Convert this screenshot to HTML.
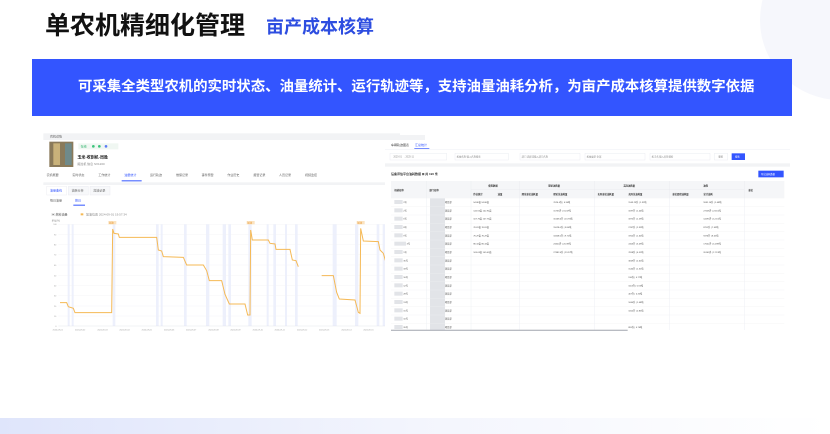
<!DOCTYPE html>
<html><head><meta charset="utf-8"><style>
body{margin:0;width:830px;height:434px;overflow:hidden;background:#fff;position:relative;font-family:"Liberation Sans","Noto Sans CJK SC",sans-serif}
.a{position:absolute}
</style></head><body>
<div class="a" style="left:760px;top:-60px;width:160px;height:160px;border-radius:50%;background:#f6f7fc"></div>
<div class="a" style="left:45px;top:9px;font-size:25px;font-weight:bold;color:#111;line-height:34px">单农机精细化管理</div>
<div class="a" style="left:266px;top:15px;font-size:18px;font-weight:bold;color:#2d4de0;line-height:24px">亩产成本核算</div>
<div class="a" style="left:32px;top:59px;width:760px;height:57px;background:#3355ff"></div>
<div class="a" style="left:78px;top:77px;font-size:14.4px;font-weight:bold;color:#fff;line-height:20px;white-space:nowrap">可采集全类型农机的实时状态、油量统计、运行轨迹等，支持油量油耗分析，为亩产成本核算提供数字依据</div>
<div class="a" style="left:0;top:418px;width:830px;height:16px;background:linear-gradient(90deg,#dfe5fb,#f3f5fd 50%,#fff)"></div>

<svg class="a" style="left:40px;top:125px" width="360" height="215" viewBox="0 0 1080 645" font-family="Liberation Sans,Noto Sans CJK SC,sans-serif">
<rect x="10" y="25" width="1070" height="590" fill="#fff"/>
<rect x="10" y="25" width="1070" height="20" fill="#f2f3f5"/>
<text x="30" y="38" font-size="9" fill="#555">农机详情</text>
<rect x="28" y="50" width="72" height="76" fill="#8a7a5a"/>
<rect x="40" y="55" width="20" height="65" fill="#c9b27a"/>
<rect x="75" y="55" width="20" height="65" fill="#6f8a8a"/>
<rect x="115" y="55" width="120" height="18" fill="#f0f7f2"/>
<text x="122" y="67" font-size="9" fill="#2db36a">在线</text>
<circle cx="160" cy="64" r="4" fill="#3cc47c"/><circle cx="178" cy="64" r="4" fill="#3cc47c"/><circle cx="198" cy="64" r="4" fill="#5b7cf5"/>
<text x="112" y="100" font-size="12" font-weight="bold" fill="#222">玉米-收割机-周胜</text>
<text x="112" y="120" font-size="9" fill="#888">拖拉机   信息   SX1200</text>
<g font-size="9" fill="#666">
<text x="20" y="153">农机概要</text><text x="97" y="153">实时状态</text><text x="175" y="153">工作统计</text><text x="253" y="153" fill="#3355ff">油量统计</text><text x="330" y="153">运行轨迹</text><text x="408" y="153">维保记录</text><text x="485" y="153">事件预警</text><text x="562" y="153">作业历史</text><text x="640" y="153">报警记录</text><text x="717" y="153">人员记录</text><text x="795" y="153">视频监控</text></g>
<rect x="245" y="166" width="60" height="3" fill="#3355ff"/>
<rect x="10" y="172" width="1070" height="8" fill="#f2f3f5"/>
<rect x="20" y="184" width="60" height="26" fill="#fff" stroke="#e3e5ea"/><rect x="85" y="184" width="60" height="26" fill="#f7f8fa" stroke="#e3e5ea"/><rect x="150" y="184" width="60" height="26" fill="#f7f8fa" stroke="#e3e5ea"/>
<text x="30" y="200" font-size="9" fill="#3355ff">油量曲线</text><text x="95" y="200" font-size="9" fill="#666">油耗分析</text><text x="160" y="200" font-size="9" fill="#666">加油记录</text>
<text x="30" y="230" font-size="9" fill="#666">每日油量</text><text x="105" y="230" font-size="9" fill="#3355ff">按日</text>
<rect x="100" y="239" width="35" height="3" fill="#3355ff"/>
<text x="35" y="272" font-size="9" fill="#555">▣ 燃料油量</text><rect x="122" y="265" width="8" height="6" fill="#f5b955"/><text x="138" y="272" font-size="9" fill="#888">加油位置 2024-09-01 19:57:34</text>
<text x="35" y="290" font-size="7" fill="#888">单位(%)</text>
<g fill="#edf0fc">
<rect x="83" y="298" width="6" height="305"/><rect x="95" y="298" width="6" height="305"/><rect x="218" y="298" width="8" height="305"/><rect x="348" y="298" width="8" height="305"/><rect x="362" y="298" width="6" height="305"/><rect x="432" y="298" width="8" height="305"/><rect x="498" y="298" width="10" height="305"/><rect x="548" y="298" width="10" height="305"/><rect x="565" y="298" width="8" height="305"/><rect x="625" y="298" width="10" height="305"/><rect x="680" y="298" width="6" height="305"/><rect x="700" y="298" width="8" height="305"/><rect x="735" y="298" width="6" height="305"/><rect x="765" y="298" width="8" height="305"/><rect x="878" y="298" width="12" height="305"/><rect x="945" y="298" width="10" height="305"/><rect x="1010" y="298" width="8" height="305"/><rect x="1028" y="298" width="8" height="305"/></g>
<g stroke="#eef0f4" stroke-width="1"><line x1="55" y1="298" x2="1045" y2="298"/><line x1="55" y1="328" x2="1045" y2="328"/><line x1="55" y1="359" x2="1045" y2="359"/><line x1="55" y1="389" x2="1045" y2="389"/><line x1="55" y1="420" x2="1045" y2="420"/><line x1="55" y1="451" x2="1045" y2="451"/><line x1="55" y1="481" x2="1045" y2="481"/><line x1="55" y1="512" x2="1045" y2="512"/><line x1="55" y1="543" x2="1045" y2="543"/><line x1="55" y1="573" x2="1045" y2="573"/><line x1="55" y1="603" x2="1045" y2="603" stroke="#d8dbe2"/></g>
<g font-size="6" fill="#999"><text x="40" y="300">100</text><text x="42" y="331">90</text><text x="42" y="362">80</text><text x="42" y="392">70</text><text x="42" y="423">60</text><text x="42" y="454">50</text><text x="42" y="484">40</text><text x="42" y="515">30</text><text x="42" y="546">20</text><text x="42" y="576">10</text><text x="46" y="606">0</text></g>
<g font-size="6" fill="#999"><text x="38" y="616">2024-09-01</text><text x="105" y="616">2024-09-02</text><text x="172" y="616">2024-09-03</text><text x="238" y="616">2024-09-04</text><text x="305" y="616">2024-09-05</text><text x="372" y="616">2024-09-06</text><text x="438" y="616">2024-09-07</text><text x="505" y="616">2024-09-08</text><text x="571" y="616">2024-09-09</text><text x="638" y="616">2024-09-10</text><text x="704" y="616">2024-09-11</text><text x="771" y="616">2024-09-12</text><text x="837" y="616">2024-09-13</text><text x="904" y="616">2024-09-14</text><text x="970" y="616">2024-09-15</text></g>
<g fill="#fbe3c0"><rect x="205" y="288" width="24" height="10"/><rect x="620" y="288" width="24" height="10"/><rect x="950" y="288" width="24" height="10"/></g>
<g font-size="7" fill="#e8952c"><text x="207" y="296">加油</text><text x="622" y="296">加油</text><text x="952" y="296">加油</text></g>
<g fill="none" stroke="#f5b955" stroke-width="3">
<polyline points="60,533 80,533 85,545 100,550 105,563 215,563 218,312 222,325 235,327 238,337 350,337 355,375 365,378 370,395 430,397 440,420 490,420 500,437 508,467 545,467 555,508 568,537 615,537 623,570 630,570 632,315 637,345 685,345 690,355 705,357 708,373 750,373 757,405 768,407 775,425"/>
<polyline points="845,452 880,452 890,502 898,522 945,525 955,562 960,565 962,310 970,348 1015,350 1020,375 1030,385 1040,420"/></g>
</svg>

<svg class="a" style="left:385px;top:130px" width="405" height="215" viewBox="0 0 1215 645" font-family="Liberation Sans,Noto Sans CJK SC,sans-serif">
<rect x="0" y="15" width="1215" height="590" fill="#fff"/>
<rect x="0" y="15" width="120" height="15" fill="#f2f3f5"/>
<text x="18" y="48" font-size="9" fill="#444">车辆轨迹图表</text><text x="90" y="48" font-size="9" fill="#3355ff">汇总统计</text>
<rect x="88" y="55" width="45" height="2" fill="#3355ff"/>
<line x1="0" y1="58" x2="1215" y2="58" stroke="#e6e8ee"/>
<g fill="#fff" stroke="#e0e3ea"><rect x="15" y="70" width="170" height="20"/><rect x="210" y="70" width="160" height="20"/><rect x="405" y="70" width="180" height="20"/><rect x="600" y="70" width="180" height="20"/><rect x="795" y="70" width="180" height="20"/><rect x="988" y="70" width="40" height="20"/></g>
<rect x="1040" y="70" width="40" height="20" fill="#3355ff"/>
<g font-size="7" fill="#888"><text x="25" y="83">2025-01   →  2025-11</text><text x="215" y="83">机械名称  输入名称搜索</text><text x="410" y="83">部门  选择或输入部门名称</text><text x="605" y="83">机械类型  全部</text><text x="800" y="83">机手名  输入名称搜索</text><text x="1000" y="83">重置</text><text x="1050" y="83" fill="#fff">搜索</text></g>
<rect x="0" y="100" width="1215" height="10" fill="#f2f3f5"/>
<text x="18" y="135" font-size="9" font-weight="bold" fill="#333">设备评估平台油耗数据 ⊞ 共 190 条</text>
<rect x="1120" y="122" width="76" height="20" fill="#3355ff"/><text x="1128" y="135" font-size="7" fill="#fff">导出油耗数据</text>
<rect x="18" y="153" width="1180" height="52" fill="#f5f6f8"/>
<g font-size="7" fill="#333" font-weight="bold"><text x="28" y="183">机械名称</text><text x="133" y="183">部门名称</text><text x="310" y="170">使用数据</text><text x="490" y="170">理论油耗量</text><text x="715" y="170">实际油耗量</text><text x="955" y="170">油耗</text><text x="1090" y="183">单位</text>
<text x="265" y="195">作业统计</text><text x="338" y="195">油量</text><text x="410" y="195">理论单位油耗量</text><text x="505" y="195">理论总油耗量</text><text x="638" y="195">实际单位油耗量</text><text x="730" y="195">实际总油耗量</text><text x="862" y="195">单位面积油耗量</text><text x="955" y="195">总计油耗</text></g>
<g stroke="#e6e8ee"><line x1="258" y1="178" x2="1078" y2="178"/><line x1="258" y1="153" x2="258" y2="600"/><line x1="403" y1="153" x2="403" y2="600"/><line x1="628" y1="153" x2="628" y2="600"/><line x1="853" y1="153" x2="853" y2="600"/><line x1="1078" y1="153" x2="1078" y2="600"/><line x1="125" y1="153" x2="125" y2="600"/></g>
<g font-size="6.5" fill="#444">
<g fill="#e2e4e8"><rect x="28" y="210" width="25" height="12"/><rect x="28" y="235" width="25" height="12"/><rect x="28" y="260" width="25" height="12"/><rect x="28" y="285" width="25" height="12"/><rect x="28" y="310" width="25" height="12"/><rect x="28" y="335" width="35" height="12"/><rect x="28" y="360" width="25" height="12"/><rect x="28" y="385" width="25" height="12"/><rect x="28" y="410" width="25" height="12"/><rect x="28" y="435" width="25" height="12"/><rect x="28" y="460" width="25" height="12"/><rect x="28" y="485" width="25" height="12"/><rect x="28" y="510" width="25" height="12"/><rect x="28" y="535" width="25" height="12"/><rect x="28" y="560" width="25" height="12"/><rect x="28" y="585" width="25" height="12"/>
<rect x="135" y="205" width="45" height="395"/></g>
<text x="55" y="219">2号</text><text x="55" y="244">2号</text><text x="55" y="269">6号</text><text x="55" y="294">8号</text><text x="55" y="319">9号</text><text x="65" y="344">3号</text><text x="55" y="369">1号</text><text x="55" y="394">35号</text><text x="55" y="419">18号</text><text x="55" y="444">16号</text><text x="55" y="469">12号</text><text x="55" y="494">28号</text><text x="55" y="519">13号</text><text x="55" y="544">15号</text><text x="55" y="569">10号</text><text x="55" y="594">26号</text>
<g><text x="180" y="219">项目部</text><text x="180" y="244">项目部</text><text x="180" y="269">项目部</text><text x="180" y="294">项目部</text><text x="180" y="319">项目部</text><text x="180" y="344">项目部</text><text x="180" y="369">项目部</text><text x="180" y="394">项目部</text><text x="180" y="419">项目部</text><text x="180" y="444">项目部</text><text x="180" y="469">项目部</text><text x="180" y="494">项目部</text><text x="180" y="519">项目部</text><text x="180" y="544">项目部</text><text x="180" y="569">项目部</text><text x="180" y="594">项目部</text></g>
<text x="265" y="219">94.86亩   94.86亩</text><text x="265" y="244">142.94亩  142.94亩</text><text x="265" y="269">107.76亩  107.76亩</text><text x="265" y="294">76.81亩   76.81亩</text><text x="265" y="319">76.29亩   76.29亩</text><text x="265" y="344">86.34亩   86.34亩</text><text x="265" y="369">109.03亩  109.03亩</text>
<text x="505" y="219">7026.4升 | 6.30吨</text><text x="505" y="244">15733升 | 31.37吨</text><text x="505" y="269">16168.0升 | 13.76吨</text><text x="505" y="294">11028.0升 | 9.80吨</text><text x="505" y="319">11668.0升 | 9.71吨</text><text x="505" y="344">23420升 | 20.39吨</text><text x="505" y="369">27382.0升 | 23.27吨</text>
<text x="730" y="219">1543.23升 | 1.31吨</text><text x="730" y="244">1697升 | 1.44吨</text><text x="730" y="269">1875升 | 1.59吨</text><text x="730" y="294">2767升 | 2.35吨</text><text x="730" y="319">1902升 | 1.62吨</text><text x="730" y="344">4103升 | 3.49吨</text><text x="730" y="369">7658升 | 6.51吨</text><text x="730" y="394">3069升 | 2.61吨</text><text x="730" y="419">1544升 | 1.31吨</text><text x="730" y="444">910升 | 0.77吨</text><text x="730" y="469">1113升 | 0.94吨</text><text x="730" y="494">407升 | 0.35吨</text><text x="730" y="519">1060升 | 1.08吨</text><text x="730" y="544">1002升 | 0.85吨</text><text x="730" y="594">895升 | 0.76吨</text>
<text x="955" y="219">5981.16升 | 5.08吨</text><text x="955" y="244">27258升 | 23.15吨</text><text x="955" y="269">14293升 | 12.15吨</text><text x="955" y="294">8751升 | 7.43吨</text><text x="955" y="319">9476升 | 8.05吨</text><text x="955" y="344">17502升 | 14.89吨</text><text x="955" y="369">20163升 | 17.13吨</text>
</g>
<g stroke="#eef0f3"><line x1="18" y1="230" x2="1198" y2="230"/><line x1="18" y1="255" x2="1198" y2="255"/><line x1="18" y1="280" x2="1198" y2="280"/><line x1="18" y1="305" x2="1198" y2="305"/><line x1="18" y1="330" x2="1198" y2="330"/><line x1="18" y1="355" x2="1198" y2="355"/><line x1="18" y1="380" x2="1198" y2="380"/><line x1="18" y1="405" x2="1198" y2="405"/><line x1="18" y1="430" x2="1198" y2="430"/><line x1="18" y1="455" x2="1198" y2="455"/><line x1="18" y1="480" x2="1198" y2="480"/><line x1="18" y1="505" x2="1198" y2="505"/><line x1="18" y1="530" x2="1198" y2="530"/><line x1="18" y1="555" x2="1198" y2="555"/><line x1="18" y1="580" x2="1198" y2="580"/></g>
<rect x="18" y="599" width="710" height="4" fill="#b8bbc2"/>
</svg>
</body></html>
